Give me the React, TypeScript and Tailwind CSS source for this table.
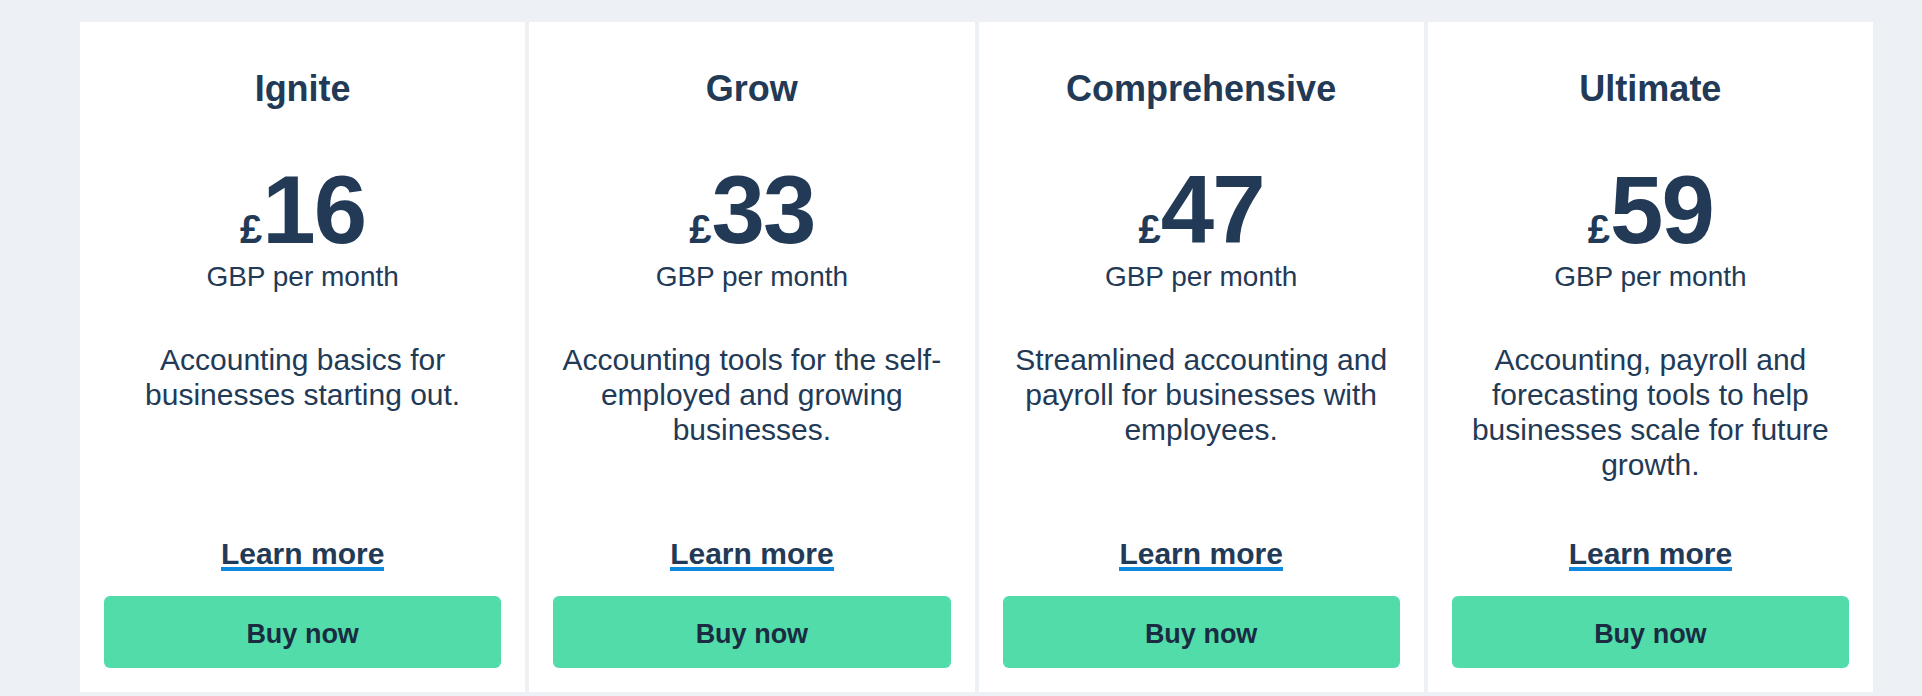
const plans = [
  { name: 'Ignite', price: '16', lines: ['Accounting basics for', 'businesses starting out.'] },
  { name: 'Grow', price: '33', lines: ['Accounting tools for the self-', 'employed and growing', 'businesses.'] },
  {
    name: 'Comprehensive',
    price: '47',
    lines: ['Streamlined accounting and', 'payroll for businesses with', 'employees.'],
  },
  {
    name: 'Ultimate',
    price: '59',
    lines: ['Accounting, payroll and', 'forecasting tools to help', 'businesses scale for future', 'growth.'],
  },
];

type Plan = (typeof plans)[number];

const PlanCard = ({ plan }: { plan: Plan }) => (
  <div className="flex h-[670px] flex-col items-center bg-white px-6 pt-[45px] pb-6 text-center">
    <h2 className="text-[36px] font-bold leading-[44px]">{plan.name}</h2>
    <div className="mt-[51px] flex items-baseline leading-none">
      <span className="text-[40px] font-bold">£</span>
      <span className="text-[96px] font-bold tracking-[-0.02em]">{plan.price}</span>
    </div>
    <p className="mt-[2px] text-[28px] leading-[34px]">GBP per month</p>
    <p className="mt-[48px] text-[30px] leading-[35px]">
      {plan.lines.map((line, i) => (
        <span key={i} className="block">
          {line}
        </span>
      ))}
    </p>
    <a href="#" className="mt-auto inline-block border-b-4 border-[#0d8ae0] text-[30px] font-bold leading-[26px]">
      Learn more
    </a>
    <button className="mt-[25px] flex h-[72px] w-full items-center justify-center rounded-md bg-[#52dca9] pt-1 text-[27px] font-bold text-[#1a2b42]">
      Buy now
    </button>
  </div>
);

export default function App() {
  return (
    <div className="min-h-screen bg-[#edf1f5] pt-[22px] font-['Liberation_Sans',Arial,sans-serif] text-[#223a56]">
      <div className="ml-[80px] grid w-[1793px] grid-cols-4 gap-1">
        {plans.map((plan) => (
          <PlanCard key={plan.name} plan={plan} />
        ))}
      </div>
    </div>
  );
}
